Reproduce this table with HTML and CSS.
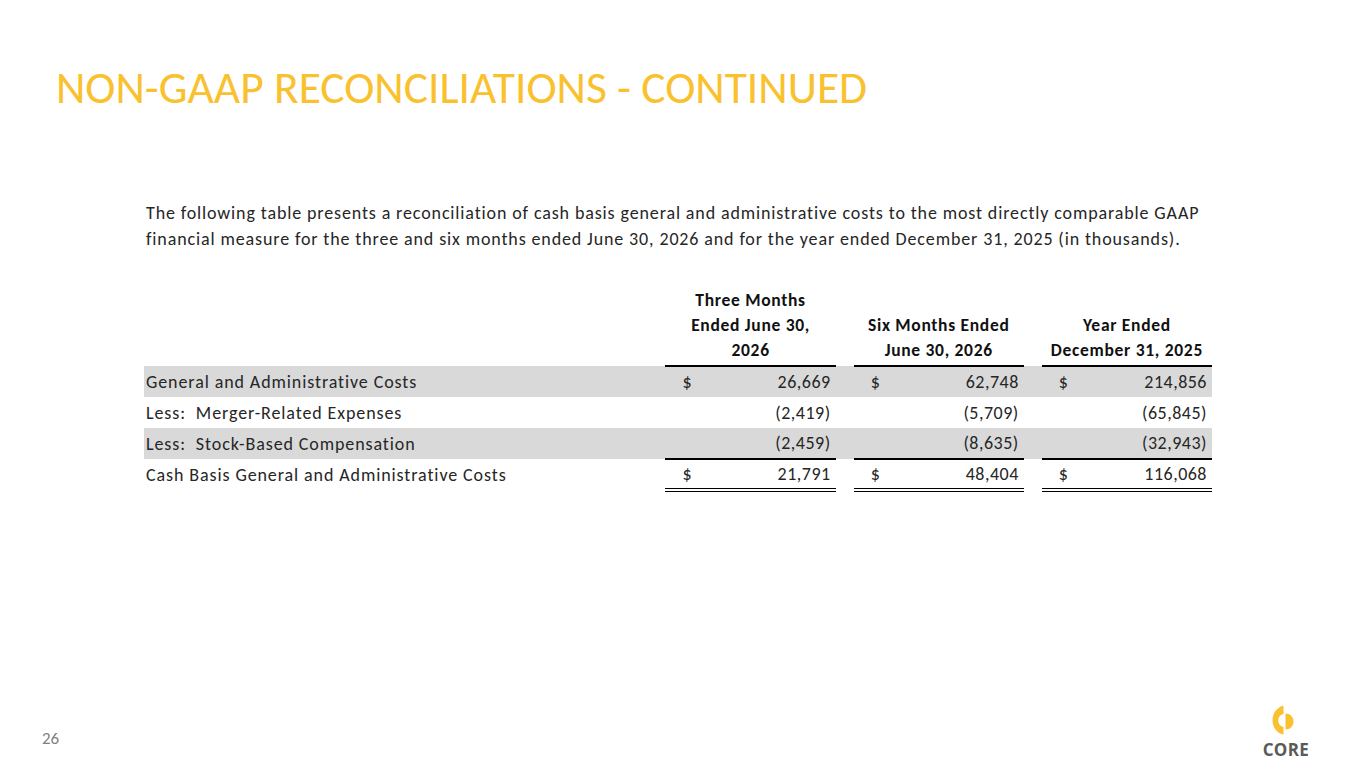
FILE: index.html
```html
<!DOCTYPE html>
<html lang="en">
<head>
<meta charset="utf-8">
<title>Non-GAAP Reconciliations - Continued</title>
<link rel="stylesheet" href="styles.css">
</head>
<body>
<div class="slide">
  <h1 class="title">NON-GAAP RECONCILIATIONS - CONTINUED</h1>
  <p class="intro">The following table presents a reconciliation of cash basis general and administrative costs to the most directly comparable GAAP<br>financial measure for the three and six months ended June 30, 2026 and for the year ended December 31, 2025 (in thousands).</p>
  <table class="recon">
    <colgroup>
      <col class="c-label">
      <col class="c-val">
      <col class="c-gap">
      <col class="c-val">
      <col class="c-gap">
      <col class="c-val">
    </colgroup>
    <thead>
      <tr>
        <th></th>
        <th class="hd">Three Months<br>Ended June 30,<br>2026</th>
        <th></th>
        <th class="hd">Six Months Ended<br>June 30, 2026</th>
        <th></th>
        <th class="hd">Year Ended<br>December 31, 2025</th>
      </tr>
    </thead>
    <tbody>
      <tr class="shade">
        <td class="label">General and Administrative Costs</td>
        <td class="val"><span class="cur">$</span><span class="num">26,669</span></td>
        <td></td>
        <td class="val"><span class="cur">$</span><span class="num">62,748</span></td>
        <td></td>
        <td class="val"><span class="cur">$</span><span class="num">214,856</span></td>
      </tr>
      <tr class="mid">
        <td class="label">Less:&nbsp; Merger-Related Expenses</td>
        <td class="val"><span class="cur"></span><span class="num">(2,419)</span></td>
        <td></td>
        <td class="val"><span class="cur"></span><span class="num">(5,709)</span></td>
        <td></td>
        <td class="val"><span class="cur"></span><span class="num">(65,845)</span></td>
      </tr>
      <tr class="shade sub">
        <td class="label">Less:&nbsp; Stock-Based Compensation</td>
        <td class="val"><span class="cur"></span><span class="num">(2,459)</span></td>
        <td></td>
        <td class="val"><span class="cur"></span><span class="num">(8,635)</span></td>
        <td></td>
        <td class="val"><span class="cur"></span><span class="num">(32,943)</span></td>
      </tr>
      <tr class="total">
        <td class="label">Cash Basis General and Administrative Costs</td>
        <td class="val"><span class="cur">$</span><span class="num">21,791</span></td>
        <td></td>
        <td class="val"><span class="cur">$</span><span class="num">48,404</span></td>
        <td></td>
        <td class="val"><span class="cur">$</span><span class="num">116,068</span></td>
      </tr>
    </tbody>
  </table>
  <div class="footer">
    <span class="page">26</span>
    <div class="logo">
      <svg class="mark" viewBox="0 0 24 30" width="24" height="30" aria-hidden="true">
        <path d="M11 0.5 C4.5 3 0.5 8.5 0.5 15.5 C0.5 22.5 5.5 28.5 11.5 29.5 L11.5 22 C8.3 21.3 6.3 18.6 6.3 15.5 C6.3 12.4 8.3 9.7 11.5 9 L11.5 2 Z" fill="#F9C12E"/>
        <path d="M13.5 8.5 C18 8.5 21.5 12 21.5 16.5 C21.5 21 18 24.5 13.5 24.5 Z" fill="#F9C12E"/>
      </svg>
      <span class="brand">CORE</span>
    </div>
  </div>
</div>
</body>
</html>
```

FILE: styles.css
```css
html, body {
  margin: 0;
  padding: 0;
  background: #ffffff;
}

.slide {
  width: 1365px;
  height: 768px;
  display: flex;
  flex-direction: column;
  font-family: Carlito, Lato, "Open Sans", sans-serif;
  color: #262626;
  box-sizing: border-box;
}

.title {
  margin: 0;
  padding: 63px 0 0 56px;
  font-size: 45.5px;
  line-height: 50px;
  font-weight: 400;
  color: #F9C12E;
}

.intro {
  margin: 87px 0 0 146px;
  font-size: 18px;
  line-height: 26px;
  letter-spacing: 0.87px;
  color: #262626;
}

.recon {
  margin: 36px 0 0 144px;
  width: 1068px;
  border-collapse: collapse;
  border-spacing: 0;
  table-layout: fixed;
  font-size: 18px;
}

.c-label { width: 521px; }
.c-val { width: 170px; }
.c-gap { width: 18px; }

.recon th {
  padding: 0 0 2px;
  vertical-align: bottom;
  font-weight: 700;
  font-size: 17.5px;
  line-height: 25px;
  letter-spacing: 0.7px;
  color: #111;
}

.recon th.hd {
  text-align: center;
  border-bottom: 2px solid #000;
}

.recon td {
  padding: 0;
  height: 30px;
  line-height: 20px;
}

.recon tr.mid td {
  height: 31px;
}

.recon tr.total td {
  height: 28px;
}

.recon tr.shade td {
  background: #D9D9D9;
}

.label {
  padding-left: 2px !important;
  white-space: nowrap;
  letter-spacing: 0.9px;
}

.val {
  overflow: hidden;
  letter-spacing: 0.5px;
}

.val .cur {
  float: left;
  padding-left: 17px;
}

.val .num {
  float: right;
  padding-right: 5px;
}

.recon tr.sub td.val {
  border-bottom: 2px solid #000;
}

.recon tr.total td.val {
  border-bottom: 4px double #000;
}

.footer {
  margin-top: auto;
  display: flex;
  justify-content: space-between;
  align-items: flex-end;
  padding: 0 56px 10px 42px;
}

.page {
  font-size: 17px;
  color: #808080;
  margin-bottom: 9px;
}

.logo {
  display: flex;
  flex-direction: column;
  align-items: center;
  gap: 7px;
}

.mark {
  display: block;
  margin-right: 4px;
}

.brand {
  font-family: "Open Sans", Lato, sans-serif;
  font-weight: 700;
  font-size: 17px;
  line-height: 16px;
  color: #5a5a5a;
  letter-spacing: 0.3px;
}
```
